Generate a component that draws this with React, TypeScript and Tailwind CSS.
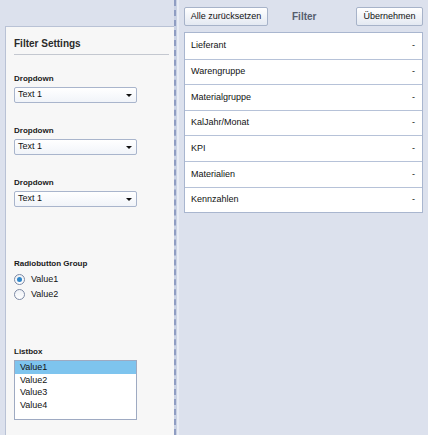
import React from 'react';

const FONT = "font-['Liberation_Sans',Arial,sans-serif]";

const filters = ['Lieferant', 'Warengruppe', 'Materialgruppe', 'KalJahr/Monat', 'KPI', 'Materialien', 'Kennzahlen'];

const Dropdown: React.FC<{ className?: string }> = ({ className = '' }) => (
  <div className={className}>
    <div className="text-[8px] leading-[10px] font-bold text-[#1a1a1a]">Dropdown</div>
    <div className="mt-[3px] w-[123px] h-[16px] rounded-[2px] border border-[#a9b5cc] bg-gradient-to-b from-white to-[#f1f4f9] flex items-center pl-[3px] pr-[4px]">
      <span className="flex-1 text-[9px] text-[#111]">Text 1</span>
      <span className="w-0 h-0 border-l-[3px] border-r-[3px] border-t-[3px] border-l-transparent border-r-transparent border-t-[#111]" />
    </div>
  </div>
);

const Radio: React.FC<{ label: string; checked?: boolean }> = ({ label, checked }) => (
  <div className="flex items-center h-[15px]">
    <span className="w-[11px] h-[11px] rounded-full border border-[#7d8aa5] bg-gradient-to-b from-[#eef1f6] to-white flex items-center justify-center">
      {checked && <span className="w-[5px] h-[5px] rounded-full bg-[#2f86c9]" />}
    </span>
    <span className="ml-[6px] text-[9px] text-[#111]">{label}</span>
  </div>
);

export default function App() {
  return (
    <div className={`${FONT} w-[428px] h-[435px] bg-[#dce1ed] flex overflow-hidden`}>
      {/* left settings panel */}
      <div className="w-[174px] pl-[5px] pt-[26px] flex flex-col">
        <div className="flex-1 bg-[#f7f7f7] border-l border-t border-[#b9c2d5] pl-[8px] pr-[5px] pt-[10px]">
          <div className="text-[10px] leading-[14px] font-bold text-[#2a2a2a] pb-[3px] border-b border-[#c4c8d0]">
            Filter Settings
          </div>
          <Dropdown className="mt-[19px]" />
          <Dropdown className="mt-[23px]" />
          <Dropdown className="mt-[23px]" />

          <div className="mt-[52px] text-[8px] leading-[10px] font-bold text-[#1a1a1a]">Radiobutton Group</div>
          <div className="mt-[3px]">
            <Radio label="Value1" checked />
            <Radio label="Value2" />
          </div>

          <div className="mt-[45px] text-[8px] leading-[10px] font-bold text-[#1a1a1a]">Listbox</div>
          <div className="mt-[3px] w-[123px] h-[60px] border border-[#9eaac2] bg-white">
            {['Value1', 'Value2', 'Value3', 'Value4'].map((v, i) => (
              <div
                key={v}
                className={`h-[12.5px] leading-[12.5px] pl-[5px] text-[9px] text-[#111] ${i === 0 ? 'bg-[#7ec4ee]' : ''}`}
              >
                {v}
              </div>
            ))}
          </div>
        </div>
      </div>

      {/* splitter */}
      <div className="w-[5px] flex">
        <div className="w-[3px] bg-[#c9d1e3] border-l-2 border-dashed border-[#8f9dc2]" />
        <div className="w-[2px] bg-[#e8ecf4]" />
      </div>

      {/* right filter area */}
      <div className="flex-1 pl-[5px] pr-[5px] pt-[7px] flex flex-col">
        <div className="flex items-center h-[19px]">
          <button className="h-[19px] w-[84px] rounded-[2px] border border-[#a7b3c9] bg-gradient-to-b from-white to-[#e4e9f2] text-[9px] text-[#111]">
            Alle zurücksetzen
          </button>
          <span className="ml-[24px] text-[10px] font-bold text-[#555d6d]">Filter</span>
          <div className="flex-1" />
          <button className="h-[19px] w-[67px] rounded-[2px] border border-[#a7b3c9] bg-gradient-to-b from-white to-[#e4e9f2] text-[9px] text-[#111]">
            Übernehmen
          </button>
        </div>
        <div className="mt-[6px] border border-[#a9b6cf] bg-white">
          {filters.map((f, i) => (
            <div
              key={f}
              className={`h-[25.6px] flex items-center pl-[6px] pr-[7px] text-[9px] text-[#111] ${i > 0 ? 'border-t border-[#b6c2d8]' : ''}`}
            >
              <span className="flex-1">{f}</span>
              <span>-</span>
            </div>
          ))}
        </div>
      </div>
    </div>
  );
}
